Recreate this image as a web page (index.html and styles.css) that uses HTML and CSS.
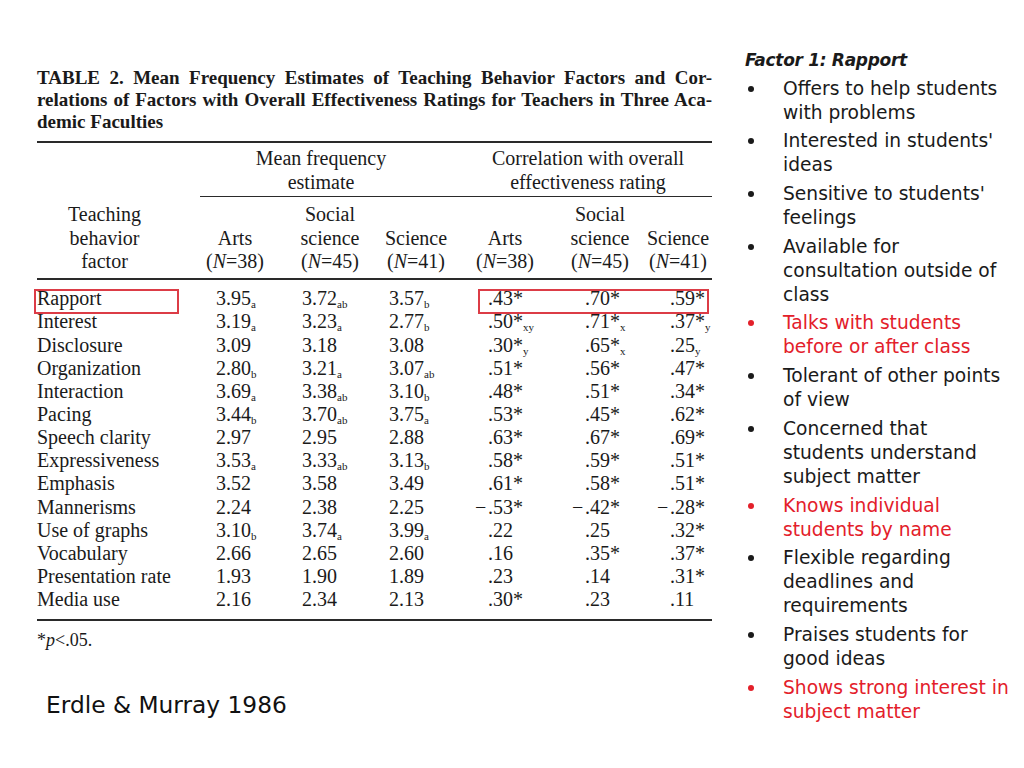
FILE: index.html
```html
<!DOCTYPE html>
<html>
<head>
<meta charset="utf-8">
<link rel="stylesheet" href="styles.css">
</head>
<body>
<div class="slide">
  <div class="left">
    <div class="title">
      <span class="tl just">TABLE 2. Mean Frequency Estimates of Teaching Behavior Factors and Cor-</span>
      <span class="tl just">relations of Factors with Overall Effectiveness Ratings for Teachers in Three Aca-</span>
      <span class="tl">demic Faculties</span>
    </div>
    <div class="table">
      <div class="rule rule-top"></div>
      <div class="grid head1">
        <div class="span-mean">Mean frequency<br>estimate</div>
        <div class="span-corr">Correlation with overall<br>effectiveness rating</div>
      </div>
      <div class="rule rule-mid"></div>
      <div class="grid head2">
        <div class="hc hlabel">Teaching<br>behavior<br>factor</div>
        <div class="hc">Arts<br>(<i>N</i>=38)</div>
        <div class="hc">Social<br>science<br>(<i>N</i>=45)</div>
        <div class="hc">Science<br>(<i>N</i>=41)</div>
        <div class="hc">Arts<br>(<i>N</i>=38)</div>
        <div class="hc">Social<br>science<br>(<i>N</i>=45)</div>
        <div class="hc">Science<br>(<i>N</i>=41)</div>
      </div>
      <div class="rule rule-thick"></div>
      <div class="rows">
        <div class="grid row row-hl">
          <div>Rapport</div><div class="c1">3.95<sub>a</sub></div><div class="c2">3.72<sub>ab</sub></div><div class="c3">3.57<sub>b</sub></div><div class="c4">.43*</div><div class="c5">.70*</div><div class="c6">.59*</div>
          <span class="box box-label"></span><span class="box box-corr"></span>
        </div>
        <div class="grid row">
          <div>Interest</div><div class="c1">3.19<sub>a</sub></div><div class="c2">3.23<sub>a</sub></div><div class="c3">2.77<sub>b</sub></div><div class="c4">.50*<sub>xy</sub></div><div class="c5">.71*<sub>x</sub></div><div class="c6">.37*<sub>y</sub></div>
        </div>
        <div class="grid row">
          <div>Disclosure</div><div class="c1">3.09</div><div class="c2">3.18</div><div class="c3">3.08</div><div class="c4">.30*<sub>y</sub></div><div class="c5">.65*<sub>x</sub></div><div class="c6">.25<sub>y</sub></div>
        </div>
        <div class="grid row">
          <div>Organization</div><div class="c1">2.80<sub>b</sub></div><div class="c2">3.21<sub>a</sub></div><div class="c3">3.07<sub>ab</sub></div><div class="c4">.51*</div><div class="c5">.56*</div><div class="c6">.47*</div>
        </div>
        <div class="grid row">
          <div>Interaction</div><div class="c1">3.69<sub>a</sub></div><div class="c2">3.38<sub>ab</sub></div><div class="c3">3.10<sub>b</sub></div><div class="c4">.48*</div><div class="c5">.51*</div><div class="c6">.34*</div>
        </div>
        <div class="grid row">
          <div>Pacing</div><div class="c1">3.44<sub>b</sub></div><div class="c2">3.70<sub>ab</sub></div><div class="c3">3.75<sub>a</sub></div><div class="c4">.53*</div><div class="c5">.45*</div><div class="c6">.62*</div>
        </div>
        <div class="grid row">
          <div>Speech clarity</div><div class="c1">2.97</div><div class="c2">2.95</div><div class="c3">2.88</div><div class="c4">.63*</div><div class="c5">.67*</div><div class="c6">.69*</div>
        </div>
        <div class="grid row">
          <div>Expressiveness</div><div class="c1">3.53<sub>a</sub></div><div class="c2">3.33<sub>ab</sub></div><div class="c3">3.13<sub>b</sub></div><div class="c4">.58*</div><div class="c5">.59*</div><div class="c6">.51*</div>
        </div>
        <div class="grid row">
          <div>Emphasis</div><div class="c1">3.52</div><div class="c2">3.58</div><div class="c3">3.49</div><div class="c4">.61*</div><div class="c5">.58*</div><div class="c6">.51*</div>
        </div>
        <div class="grid row">
          <div>Mannerisms</div><div class="c1">2.24</div><div class="c2">2.38</div><div class="c3">2.25</div><div class="c4"><span class="neg">−</span>.53*</div><div class="c5"><span class="neg">−</span>.42*</div><div class="c6"><span class="neg">−</span>.28*</div>
        </div>
        <div class="grid row">
          <div>Use of graphs</div><div class="c1">3.10<sub>b</sub></div><div class="c2">3.74<sub>a</sub></div><div class="c3">3.99<sub>a</sub></div><div class="c4">.22</div><div class="c5">.25</div><div class="c6">.32*</div>
        </div>
        <div class="grid row">
          <div>Vocabulary</div><div class="c1">2.66</div><div class="c2">2.65</div><div class="c3">2.60</div><div class="c4">.16</div><div class="c5">.35*</div><div class="c6">.37*</div>
        </div>
        <div class="grid row">
          <div>Presentation rate</div><div class="c1">1.93</div><div class="c2">1.90</div><div class="c3">1.89</div><div class="c4">.23</div><div class="c5">.14</div><div class="c6">.31*</div>
        </div>
        <div class="grid row">
          <div>Media use</div><div class="c1">2.16</div><div class="c2">2.34</div><div class="c3">2.13</div><div class="c4">.30*</div><div class="c5">.23</div><div class="c6">.11</div>
        </div>
      </div>
      <div class="rule rule-bottom"></div>
      <div class="foot">*<i>p</i>&lt;.05.</div>
    </div>
    <div class="cite">Erdle &amp; Murray 1986</div>
  </div>
  <div class="right">
    <div class="factor">Factor 1: Rapport</div>
    <ul class="items">
      <li>Offers to help students<br>with problems</li>
      <li>Interested in students'<br>ideas</li>
      <li>Sensitive to students'<br>feelings</li>
      <li>Available for<br>consultation outside of<br>class</li>
      <li class="red">Talks with students<br>before or after class</li>
      <li>Tolerant of other points<br>of view</li>
      <li>Concerned that<br>students understand<br>subject matter</li>
      <li class="red">Knows individual<br>students by name</li>
      <li>Flexible regarding<br>deadlines and<br>requirements</li>
      <li>Praises students for<br>good ideas</li>
      <li class="red">Shows strong interest in<br>subject matter</li>
    </ul>
  </div>
</div>
</body>
</html>
```

FILE: styles.css
```css
html, body {
  margin: 0;
  padding: 0;
  background: #ffffff;
}

.slide {
  width: 1024px;
  height: 768px;
  display: flex;
  overflow: hidden;
}

.left {
  width: 675px;
  padding-left: 37px;
  padding-top: 67px;
  color: #1a1a1a;
}

.title {
  font-family: "Liberation Serif", "Times New Roman", serif;
  font-weight: bold;
  font-size: 19px;
  line-height: 22px;
}

.tl {
  display: block;
  white-space: nowrap;
}

.tl.just {
  text-align: justify;
  text-align-last: justify;
  white-space: normal;
}

.table {
  font-family: "Liberation Serif", "Times New Roman", serif;
  font-size: 20px;
}

.rule {
  background: #2a2a2a;
}

.rule-top {
  margin-top: 8px;
  height: 2px;
}

.rule-mid {
  margin-top: 2px;
  margin-left: 163px;
  height: 1px;
}

.rule-thick {
  margin-top: 4px;
  height: 2px;
}

.rule-bottom {
  margin-top: 7.5px;
  height: 2px;
}

.grid {
  display: grid;
  grid-template-columns: 151px 94px 96px 76px 102px 88px 68px;
}

.head1 {
  padding-top: 3px;
  line-height: 24px;
  text-align: center;
}

.span-mean {
  grid-column: 2 / 5;
}

.span-corr {
  grid-column: 5 / 8;
  padding-left: 10px;
}

.head2 {
  margin-top: 6px;
  line-height: 23.5px;
  align-items: end;
}

.hc {
  text-align: center;
  white-space: nowrap;
}

.hlabel {
  padding-right: 16px;
}

.rows {
  margin-top: 7.75px;
}

.row {
  line-height: 23.15px;
  height: 23.15px;
  white-space: nowrap;
}

.row sub {
  font-size: 11px;
  line-height: 0;
  vertical-align: -3px;
}

.c1 { padding-left: 28px; }
.c2 { padding-left: 20px; }
.c3 { padding-left: 11px; }
.c4 { padding-left: 34px; }
.c5 { padding-left: 29px; }
.c6 { padding-left: 26px; }

.neg {
  display: inline-block;
  width: 13px;
  margin-left: -13px;
}

.row-hl {
  position: relative;
}

.box {
  position: absolute;
  top: 2px;
  height: 21px;
  border: 2px solid #dc3c46;
}

.box-label {
  left: -3px;
  width: 141px;
}

.box-corr {
  left: 441px;
  width: 227px;
}

.foot {
  margin-top: 8px;
  font-size: 18px;
  line-height: 22px;
}

.cite {
  margin-top: 40px;
  padding-left: 9px;
  font-family: "DejaVu Sans", "Liberation Sans", sans-serif;
  font-size: 23.3px;
  line-height: 28px;
  color: #111111;
}

.right {
  margin-left: 33px;
  padding-top: 48px;
  font-family: "DejaVu Sans", "Liberation Sans", sans-serif;
  font-size: 18.67px;
  color: #1a1a1a;
}

.factor {
  font-weight: bold;
  font-style: italic;
  font-size: 17px;
  letter-spacing: -0.3px;
  line-height: 24px;
}

.items {
  list-style: none;
  margin: 0;
  padding: 0;
}

.items li {
  display: flex;
  margin-top: 4.7px;
  line-height: 24px;
  white-space: nowrap;
}

.items li::before {
  content: "";
  flex: none;
  width: 6px;
  height: 6px;
  border-radius: 50%;
  background: currentColor;
  margin: 9px 29px 0 3px;
}

.items li.red {
  color: #e3202a;
}
```
